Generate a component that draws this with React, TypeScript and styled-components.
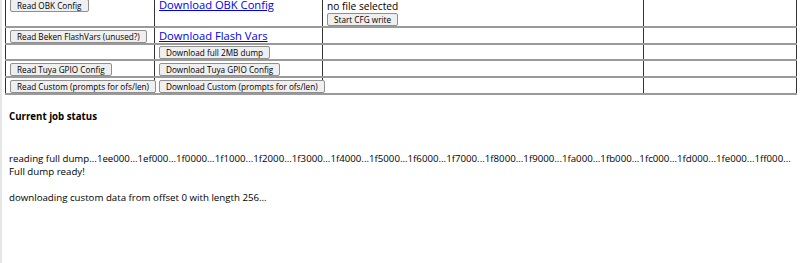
import React from "react";
import styled, { createGlobalStyle } from "styled-components";

const GlobalStyle = createGlobalStyle`
  html, body {
    margin: 0;
    padding: 0;
    background: #ffffff;
    overflow: hidden;
  }
  body {
    font-family: "Open Sans", "Noto Sans", sans-serif;
    font-size: 10px;
    color: #000;
  }
`;

const Page = styled.div`
  height: 263px;
  border-left: 2px solid #e6e6e6;
  padding-left: 3px;
  overflow: hidden;
`;

const ToolTable = styled.table`
  margin-top: -18px;
  width: 791px;
  border-collapse: collapse;
  table-layout: fixed;
  border: 1px solid #333;
`;

const Col = styled.col<{ $w: number }>`
  width: ${(p) => p.$w}px;
`;

const Cell = styled.td`
  border-left: 1px solid #333;
  border-right: 1px solid #333;
  border-top: 2px solid #9a9a9a;
  border-bottom: 2px solid #9a9a9a;
  padding: 1px 3px 0 4px;
  vertical-align: middle;
  line-height: 12px;
  white-space: nowrap;
`;

const Btn = styled.button`
  font-family: "Open Sans", "Noto Sans", sans-serif;
  font-size: 8.2px;
  line-height: 11px;
  height: 13px;
  padding: 0 6px;
  margin: 0;
  background: #efefef;
  color: #000;
  border: 1px solid #8f8f8f;
  border-radius: 2px;
  vertical-align: middle;
`;

const DlLink = styled.a`
  color: #0000ee;
  text-decoration: underline;
  font-size: 11.2px;
`;

const Spacer = styled.div`
  height: 16px;
`;

const FileNote = styled.div`
  font-size: 10.2px;
  line-height: 11px;
`;

const Heading = styled.h4`
  margin: 15px 0 0 4px;
  font-size: 9.7px;
  font-weight: 700;
`;

const StatusLog = styled.div`
  margin: 29px 0 0 4px;
  font-size: 9.7px;
  line-height: 13px;
  white-space: pre;
`;

const statusText =
  "reading full dump...1ee000...1ef000...1f0000...1f1000...1f2000...1f3000...1f4000...1f5000...1f6000...1f7000...1f8000...1f9000...1fa000...1fb000...1fc000...1fd000...1fe000...1ff000...\nFull dump ready!\n\ndownloading custom data from offset 0 with length 256...";

export default function App() {
  return (
    <>
      <GlobalStyle />
      <Page>
        <ToolTable>
          <colgroup>
            <Col $w={149} />
            <Col $w={168} />
            <Col $w={321} />
            <Col $w={153} />
          </colgroup>
          <tbody>
            <tr>
              <Cell>
                <Btn>Read OBK Config</Btn>
              </Cell>
              <Cell>
                <DlLink href="#">Download OBK Config</DlLink>
              </Cell>
              <Cell>
                <Spacer />
                <FileNote>no file selected</FileNote>
                <Btn>Start CFG write</Btn>
              </Cell>
              <Cell />
            </tr>
            <tr>
              <Cell>
                <Btn>Read Beken FlashVars (unused?)</Btn>
              </Cell>
              <Cell>
                <DlLink href="#">Download Flash Vars</DlLink>
              </Cell>
              <Cell />
              <Cell />
            </tr>
            <tr>
              <Cell />
              <Cell>
                <Btn>Download full 2MB dump</Btn>
              </Cell>
              <Cell />
              <Cell />
            </tr>
            <tr>
              <Cell>
                <Btn>Read Tuya GPIO Config</Btn>
              </Cell>
              <Cell>
                <Btn>Download Tuya GPIO Config</Btn>
              </Cell>
              <Cell />
              <Cell />
            </tr>
            <tr>
              <Cell>
                <Btn>Read Custom (prompts for ofs/len)</Btn>
              </Cell>
              <Cell>
                <Btn>Download Custom (prompts for ofs/len)</Btn>
              </Cell>
              <Cell />
              <Cell />
            </tr>
          </tbody>
        </ToolTable>
        <Heading>Current job status</Heading>
        <StatusLog>{statusText}</StatusLog>
      </Page>
    </>
  );
}
